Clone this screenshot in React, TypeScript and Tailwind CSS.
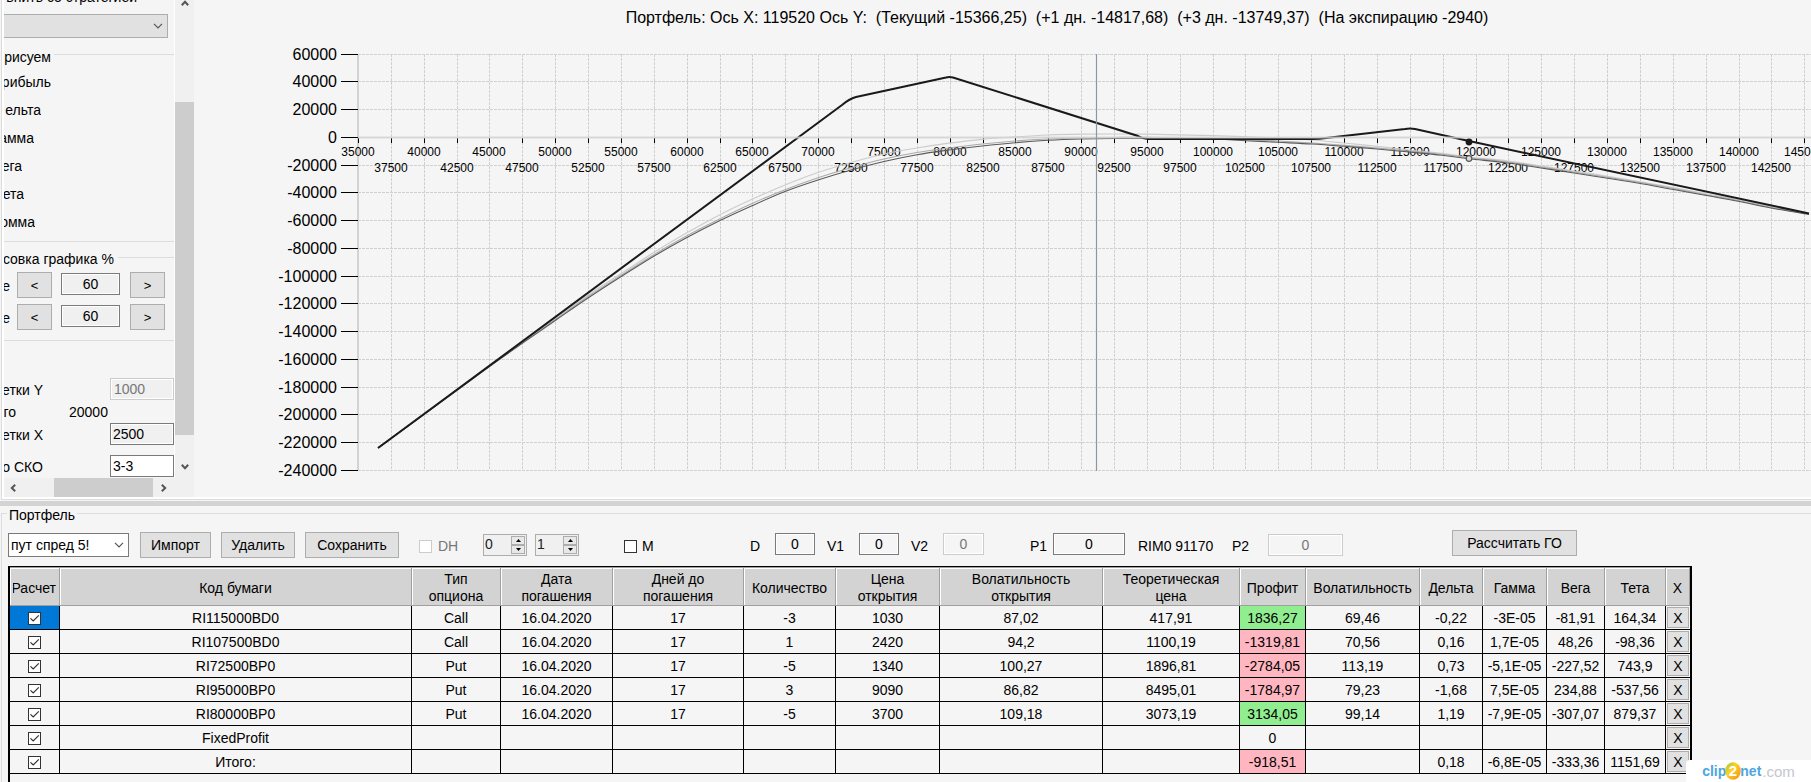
import React, { useState } from 'react';
import clsx from 'clsx';

interface Position {
  code: string;
  cells: string[];
  profit: string;
  greeks: string[];
}

const POSITIONS: Position[] = [
  { code: 'RI115000BD0', cells: ['Call', '16.04.2020', '17', '-3', '1030', '87,02', '417,91'], profit: '1836,27', greeks: ['69,46', '-0,22', '-3E-05', '-81,91', '164,34'] },
  { code: 'RI107500BD0', cells: ['Call', '16.04.2020', '17', '1', '2420', '94,2', '1100,19'], profit: '-1319,81', greeks: ['70,56', '0,16', '1,7E-05', '48,26', '-98,36'] },
  { code: 'RI72500BP0', cells: ['Put', '16.04.2020', '17', '-5', '1340', '100,27', '1896,81'], profit: '-2784,05', greeks: ['113,19', '0,73', '-5,1E-05', '-227,52', '743,9'] },
  { code: 'RI95000BP0', cells: ['Put', '16.04.2020', '17', '3', '9090', '86,82', '8495,01'], profit: '-1784,97', greeks: ['79,23', '-1,68', '7,5E-05', '234,88', '-537,56'] },
  { code: 'RI80000BP0', cells: ['Put', '16.04.2020', '17', '-5', '3700', '109,18', '3073,19'], profit: '3134,05', greeks: ['99,14', '1,19', '-7,9E-05', '-307,07', '879,37'] },
  { code: 'FixedProfit', cells: ['', '', '', '', '', '', ''], profit: '0', greeks: ['', '', '', '', ''] },
  { code: 'Итого:', cells: ['', '', '', '', '', '', ''], profit: '-918,51', greeks: ['', '0,18', '-6,8E-05', '-333,36', '1151,69'] },
];

const COLUMNS: { title: string; width: string }[] = [
  { title: 'Расчет', width: 'w-[50px]' },
  { title: 'Код бумаги', width: '' },
  { title: 'Тип опциона', width: 'w-[89px]' },
  { title: 'Дата погашения', width: 'w-[112px]' },
  { title: 'Дней до погашения', width: 'w-[131px]' },
  { title: 'Количество', width: 'w-[92px]' },
  { title: 'Цена открытия', width: 'w-[104px]' },
  { title: 'Волатильность открытия', width: 'w-[163px]' },
  { title: 'Теоретическая цена', width: 'w-[137px]' },
  { title: 'Профит', width: 'w-[66px]' },
  { title: 'Волатильность', width: 'w-[114px]' },
  { title: 'Дельта', width: 'w-[63px]' },
  { title: 'Гамма', width: 'w-[64px]' },
  { title: 'Вега', width: 'w-[58px]' },
  { title: 'Тета', width: 'w-[61px]' },
  { title: 'X', width: 'w-[24px]' },
];

const Chevron = ({ className }: { className?: string }) => (
  <svg viewBox="0 0 10 6" className={clsx('pointer-events-none h-[6px] w-[10px]', className)}>
    <path d="M1 0.8 L5 4.8 L9 0.8" fill="none" stroke="#555" strokeWidth="1.2" />
  </svg>
);

const ScrollArrow = ({ className }: { className?: string }) => (
  <svg viewBox="0 0 8 6" className={clsx('h-[6px] w-[8px]', className)}>
    <path d="M0.8 0.8 L4 4.2 L7.2 0.8" fill="none" stroke="#555" strokeWidth="2" />
  </svg>
);

const CheckBox = ({ id, label, defaultChecked, disabled }: { id: string; label?: string; defaultChecked?: boolean; disabled?: boolean }) => {
  const [checked, setChecked] = useState(!!defaultChecked);
  return (
    <span className="inline-grid align-middle">
      <input
        id={id}
        type="checkbox"
        aria-label={label}
        checked={checked}
        disabled={disabled}
        onChange={(e) => setChecked(e.target.checked)}
        className="col-start-1 row-start-1 size-[13px] appearance-none border border-[#333] bg-white disabled:border-[#ccc]"
      />
      {checked && (
        <svg viewBox="0 0 13 13" className="pointer-events-none col-start-1 row-start-1 size-[13px]">
          <path d="M2.5 6.3 L5.2 9 L10.8 3.4" fill="none" stroke="#333" strokeWidth="1.2" />
        </svg>
      )}
    </span>
  );
};

const Button = ({ className, children }: { className?: string; children: React.ReactNode }) => (
  <button type="button" className={clsx('h-[26px] border border-[#adadad] bg-[#e1e1e1] text-center hover:bg-[#e5f1fb]', className)}>
    {children}
  </button>
);

const Field = ({ id, value, label, disabled, className }: { id: string; value: string; label?: string; disabled?: boolean; className?: string }) => (
  <input
    id={id}
    aria-label={label}
    defaultValue={value}
    disabled={disabled}
    className={clsx('h-[22px] shrink-0 border border-[#7a7a7a] shadow-[inset_0_0_0_1px_white] disabled:border-[#ccc] disabled:text-[#777]', className)}
  />
);

const Spinner = ({ id, initial, label }: { id: string; initial: number; label: string }) => {
  const [value, setValue] = useState(initial);
  return (
    <div className="flex h-[22px] w-[44px] border border-[#adadad] bg-[#f0f0f0]">
      <input
        id={id}
        aria-label={label}
        value={value}
        onChange={(e) => setValue(Number(e.target.value) || 0)}
        className="h-[19px] w-[27px] bg-transparent pl-px leading-[19px] text-[#222]"
      />
      <div className="flex w-[14px] flex-col pt-px">
        <button type="button" aria-label="Больше" onClick={() => setValue(value + 1)} className="flex h-[9px] items-center justify-center border border-[#adadad] bg-[#e8e8e8]">
          <svg viewBox="0 0 5 3" className="h-[3px] w-[5px]"><path d="M0 3 L2.5 0 L5 3 Z" /></svg>
        </button>
        <button type="button" aria-label="Меньше" onClick={() => setValue(value - 1)} className="flex h-[9px] items-center justify-center border border-[#adadad] bg-[#e8e8e8]">
          <svg viewBox="0 0 5 3" className="h-[3px] w-[5px]"><path d="M0 0 L2.5 3 L5 0 Z" /></svg>
        </button>
      </div>
    </div>
  );
};

// Labels are cut on the left because the panel is scrolled horizontally
const CutLabel = ({ htmlFor, className, children }: { htmlFor?: string; className?: string; children: React.ReactNode }) => (
  <label htmlFor={htmlFor} className={clsx('flex shrink-0 justify-end overflow-hidden whitespace-nowrap', className)}>
    {children}
  </label>
);

const ScaleRow = ({ id, className }: { id: string; className?: string }) => {
  const [scale, setScale] = useState(60);
  return (
    <div className={clsx('flex items-center', className)}>
      <CutLabel htmlFor={id} className="w-[6px] pt-[2px]">е</CutLabel>
      <button type="button" onClick={() => setScale(scale - 5)} className="ml-[7px] h-[26px] w-[35px] border border-[#adadad] bg-[#e1e1e1] text-[13px]">&lt;</button>
      <input
        id={id}
        value={scale}
        onChange={(e) => setScale(Number(e.target.value) || 0)}
        className="mb-[2px] ml-[9px] h-[22px] w-[59px] border border-[#7a7a7a] bg-[#f0f0f0] text-center shadow-[inset_0_0_0_1px_white]"
      />
      <button type="button" onClick={() => setScale(scale + 5)} className="ml-[10px] h-[26px] w-[35px] border border-[#adadad] bg-[#e1e1e1] text-[13px]">&gt;</button>
    </div>
  );
};

const SettingsPanel = () => (
  <aside className="w-[190px] shrink-0">
    <div className="flex">
      <div className="w-[170px] overflow-hidden pb-px">
        <CutLabel htmlFor="compare" className="-mt-[13px] h-5 w-[133px] leading-5">внить со стратегией</CutLabel>
        <div className="mt-[7px] grid w-[164px] items-center">
          <select id="compare" className="col-start-1 row-start-1 h-6 appearance-none border border-l-0 border-[#adadad] bg-[#e1e1e1]">
            <option />
          </select>
          <Chevron className="col-start-1 row-start-1 mr-[5px] justify-self-end" />
        </div>

        <div className="mt-[9px] flex h-5 gap-[3px] leading-5">
          <CutLabel className="w-[47px]">рисуем</CutLabel>
          <div className="mt-[7px] h-px flex-1 bg-[#dcdcdc]" />
        </div>
        <div className="mt-px leading-7">
          <CutLabel className="w-[47px]">рибыль</CutLabel>
          <CutLabel className="w-[37px]">ельта</CutLabel>
          <CutLabel className="w-[30px]">амма</CutLabel>
          <CutLabel className="w-[18px]">ега</CutLabel>
          <CutLabel className="w-[20px]">ета</CutLabel>
          <CutLabel className="w-[31px]">омма</CutLabel>
        </div>
        <div className="mt-[5px] h-px bg-[#dcdcdc]" />

        <div className="mt-[7px] flex h-5 gap-1 leading-5">
          <CutLabel className="w-[110px]">совка графика %</CutLabel>
          <div className="mt-[8px] h-px flex-1 bg-[#dcdcdc]" />
        </div>
        <ScaleRow id="scale-more" className="mt-[3px]" />
        <ScaleRow id="scale-less" className="mt-[6px]" />
        <div className="mt-[10px] h-px bg-[#dcdcdc]" />

        <div className="mt-[37px] flex justify-between">
          <CutLabel htmlFor="grid-y" className="w-[39px] pt-1">етки Y</CutLabel>
          <Field id="grid-y" value="1000" disabled className="w-[64px] bg-[#f0f0f0] pl-[3px]" />
        </div>
        <div className="flex h-[23px] leading-6">
          <CutLabel className="w-[12px]">го</CutLabel>
          <span className="ml-[53px]">20000</span>
        </div>
        <div className="flex justify-between">
          <CutLabel htmlFor="grid-x" className="w-[39px] pt-1">етки X</CutLabel>
          <Field id="grid-x" value="2500" className="w-[64px] bg-[#f0f0f0] pl-[2px]" />
        </div>
        <div className="mt-[10px] flex justify-between">
          <CutLabel htmlFor="sko" className="w-[39px] pt-1">о СКО</CutLabel>
          <Field id="sko" value="3-3" className="w-[64px] bg-white pl-[2px]" />
        </div>
      </div>
      <div className="flex w-[20px] flex-col items-center border-l border-white bg-[#f0f0f0]">
        <ScrollArrow className="rotate-180" />
        <div className="mt-[96px] h-[333px] w-full bg-[#cdcdcd]" />
        <ScrollArrow className="mt-[29px]" />
      </div>
    </div>
    <div className="flex h-[19px] items-center bg-[#f0f0f0]">
      <ScrollArrow className="ml-[5px] rotate-90" />
      <div className="ml-[37px] h-full w-[99px] bg-[#cdcdcd]" />
      <ScrollArrow className="ml-[7px] -rotate-90" />
    </div>
  </aside>
);

const xPos = (strike: number) => Math.round(358 + ((strike - 35000) / 2500) * 32.87);
const yPos = (profit: number) => Math.round(136.95 - (profit / 20000) * 27.75);

const STRIKES = Array.from({ length: 45 }, (_, i) => 35000 + i * 2500);
const LEVELS = Array.from({ length: 16 }, (_, i) => 60000 - i * 20000);

type Point = [number, number];

const EXPIRATION = 'M378 448 L842 105 Q849 99 856 97 L946 77.5 Q949 76.5 953 77.5 L1138 136 Q1143 139 1148 139 L1312 139 Q1320 139 1326 138 L1405 129 Q1410 128 1415 129 L1469 141 L1809 213.5';
const CURRENT: Point[] = [[378, 448], [460, 388], [500, 359], [556, 320], [588, 298], [622, 276], [655, 255.5], [686, 238], [719, 221], [752, 205.7], [785, 191.5], [818, 180], [851, 170], [884, 161.5], [917, 154.7], [949, 150], [982, 146], [1015, 142.7], [1048, 140.3], [1081, 139], [1114, 138.5], [1147, 138.5], [1213, 139.3], [1246, 140.7], [1278, 142.3], [1312, 144], [1344, 146.3], [1377, 149], [1409, 152], [1442, 155.3], [1469, 158.7], [1508, 163], [1541, 168], [1574, 173], [1606, 178], [1639, 183.3], [1672, 189.3], [1705, 195.3], [1738, 201.3], [1771, 208], [1809, 214.5]];
const PLUS_ONE: Point[] = [[378, 448], [460, 388], [500, 358.5], [556, 319], [588, 296.5], [622, 274.7], [655, 254], [686, 236.3], [719, 219.3], [752, 203.5], [785, 189.7], [818, 177.7], [851, 167.7], [884, 159], [917, 152.5], [949, 148], [982, 144], [1015, 141], [1048, 139], [1081, 138], [1114, 137.5], [1147, 137.3], [1213, 138.3], [1246, 139.5], [1278, 141], [1312, 143], [1344, 145.3], [1377, 148], [1409, 151], [1442, 154.3], [1469, 157.7], [1508, 162], [1541, 167], [1574, 172], [1606, 177], [1639, 182.3], [1672, 188.3], [1705, 194.5], [1738, 200.5], [1771, 207.3], [1809, 214]];
const PLUS_THREE: Point[] = [[378, 448], [460, 388], [500, 358], [556, 317.5], [588, 295], [622, 273], [655, 251.7], [686, 233.3], [719, 215.2], [752, 199.3], [785, 185], [818, 172.5], [851, 162.5], [884, 154], [917, 148], [949, 143.2], [982, 139.3], [1015, 136.9], [1048, 135], [1081, 134.2], [1114, 134], [1147, 134.2], [1213, 135.7], [1278, 138], [1312, 140], [1344, 143], [1377, 146.3], [1409, 150], [1442, 153.3], [1469, 157], [1508, 161], [1541, 166], [1574, 171], [1606, 176], [1639, 181.5], [1672, 187.3], [1705, 193.5], [1738, 199.5], [1771, 206.3], [1809, 213.3]];

// Catmull-Rom spline through the points, as bezier segments
const smooth = (pts: Point[]) =>
  pts.slice(1).reduce((d, p, i) => {
    const prev = pts[Math.max(i - 1, 0)];
    const from = pts[i];
    const next = pts[Math.min(i + 2, pts.length - 1)];
    return `${d} C${from[0] + (p[0] - prev[0]) / 6} ${from[1] + (p[1] - prev[1]) / 6} ${p[0] - (next[0] - from[0]) / 6} ${p[1] - (next[1] - from[1]) / 6} ${p[0]} ${p[1]}`;
  }, `M${pts[0][0]} ${pts[0][1]}`);

const ProfitChart = () => (
  <svg viewBox="194 0 1617 497" preserveAspectRatio="xMinYMin meet" className="min-w-0 flex-1 self-start">
    <text x="1057" y="23" fontSize="16" textAnchor="middle">
      Портфель: Ось X: 119520 Ось Y:{'\u00a0 '}(Текущий -15366,25){'\u00a0 '}(+1 дн. -14817,68){'\u00a0 '}(+3 дн. -13749,37){'\u00a0 '}(На экспирацию -2940)
    </text>

    <g stroke="#d0d0d0" strokeDasharray="3 1" shapeRendering="crispEdges">
      {LEVELS.map((l) => <line key={l} x1="358" x2="1811" y1={yPos(l) + 0.5} y2={yPos(l) + 0.5} />)}
      {STRIKES.map((s) => <line key={s} x1={xPos(s) + 0.5} x2={xPos(s) + 0.5} y1="54" y2="470" />)}
    </g>

    {/* Axes */}
    <line x1="358" x2="358" y1="54" y2="471" stroke="#d3d3d3" strokeWidth="2" />
    {LEVELS.map((l) => (
      <g key={l}>
        <line x1="341" x2="358" y1={yPos(l) + 0.5} y2={yPos(l) + 0.5} stroke="#000" />
        <text x="337" y={yPos(l) + 6} fontSize="16" textAnchor="end">{l}</text>
      </g>
    ))}
    {STRIKES.map((s, i) => (
      <g key={s}>
        <line x1={xPos(s) + 0.5} x2={xPos(s) + 0.5} y1="138" y2="143" stroke="#000" />
        <text x={xPos(s)} y={i % 2 ? 172 : 156} fontSize="12" textAnchor="middle">{s}</text>
      </g>
    ))}

    <g fill="none">
      <path d={smooth(PLUS_THREE)} stroke="#cccccc" strokeWidth="1.2" />
      <path d={smooth(PLUS_ONE)} stroke="#aaaaaa" strokeWidth="1.1" />
      <path d={smooth(CURRENT)} stroke="#5a5a5a" strokeWidth="1.1" />
      <path d={EXPIRATION} stroke="#1a1a1a" strokeWidth="2" />
    </g>
    <line x1="358" x2="1811" y1="137.5" y2="137.5" stroke="#d3d3d3" strokeWidth="2" strokeOpacity="0.8" />
    <line x1="1096.5" x2="1096.5" y1="54" y2="471" stroke="#8c96a0" strokeWidth="1.2" />

    {/* Cursor markers */}
    <circle cx="1469" cy="142" r="3.4" fill="#1a1a1a" />
    <circle cx="1469" cy="158.5" r="2.8" fill="#ddd" stroke="#555" strokeWidth="1.2" />
  </svg>
);

const Toolbar = () => (
  <div className="flex items-start pt-[6px]">
    <div className="mt-[3px] grid w-[121px] items-center">
      <select aria-label="Портфель" className="col-start-1 row-start-1 h-6 appearance-none border border-[#7a7a7a] bg-white pl-[2px]">
        <option>пут спред 5!</option>
      </select>
      <Chevron className="col-start-1 row-start-1 mr-[5px] justify-self-end" />
    </div>
    <Button className="mt-[2px] ml-[11px] w-[71px]">Импорт</Button>
    <Button className="mt-[2px] ml-[10px] w-[74px]">Удалить</Button>
    <Button className="mt-[2px] ml-[10px] w-[94px]">Сохранить</Button>

    <div className="mt-[6px] ml-[20px] flex h-5 items-center gap-[6px] text-[#777]">
      <CheckBox id="dh" disabled />
      <label htmlFor="dh" className="w-[21px]">DH</label>
    </div>
    <div className="mt-[4px] ml-[24px] flex gap-2">
      <Spinner id="dh-from" initial={0} label="DH от" />
      <Spinner id="dh-to" initial={1} label="DH до" />
    </div>
    <div className="mt-[6px] ml-[45px] flex h-5 items-center gap-[5px]">
      <CheckBox id="m" />
      <label htmlFor="m" className="w-[12px]">M</label>
    </div>

    <label htmlFor="d" className="mt-[8px] ml-[96px] w-[25px]">D</label>
    <Field id="d" value="0" className="mt-[3px] w-[40px] text-center" />
    <label htmlFor="v1" className="mt-[8px] ml-[12px] w-[32px]">V1</label>
    <Field id="v1" value="0" className="mt-[3px] w-[40px] text-center" />
    <label htmlFor="v2" className="mt-[8px] ml-[12px] w-[32px]">V2</label>
    <Field id="v2" value="0" disabled className="mt-[3px] w-[41px] text-center" />
    <label htmlFor="p1" className="mt-[8px] ml-[46px] w-[23px]">P1</label>
    <Field id="p1" value="0" className="mt-[3px] w-[72px] text-center" />
    <span className="mt-[8px] ml-[13px] w-[81px] whitespace-nowrap">RIM0 91170</span>
    <label htmlFor="p2" className="mt-[8px] ml-[13px] w-[36px]">P2</label>
    <Field id="p2" value="0" disabled className="mt-[4px] w-[75px] text-center" />
    <Button className="ml-[109px] w-[125px]">Рассчитать ГО</Button>
  </div>
);

const PositionsTable = () => (
  <div className="mr-[119px] flex-1 border-x-2 border-t border-black">
    <table className="w-full table-fixed border-separate border-spacing-0 border-t border-[#a0a0a0] text-center">
      <colgroup>
        {COLUMNS.map((c, i) => <col key={i} className={c.width} />)}
      </colgroup>
      <thead>
        <tr className="h-[38px] bg-[#d3d3d3]">
          {COLUMNS.map((c, i) => (
            <th key={i} className="border-r border-b border-[#a0a0a0] p-0 pt-[3px] font-normal shadow-[inset_1px_1px_0_white]">
              {i === 0 ? (
                <span className="mx-auto flex w-[43px] justify-end overflow-hidden">{c.title}</span>
              ) : (
                <span className={clsx('block', c.title.includes(' ') && i > 1 && 'px-[10px]')}>{c.title}</span>
              )}
            </th>
          ))}
        </tr>
      </thead>
      <tbody>
        {POSITIONS.map((p, row) => (
          <tr key={p.code} className="h-6 *:border-r *:border-b *:border-black *:p-0 *:last:border-r-0">
            <td className={clsx('leading-none', row === 0 && 'bg-[#0078d7]')}>
              <CheckBox id={`use-${row}`} label={`Расчет ${p.code}`} defaultChecked />
            </td>
            <td><div className="pt-px">{p.code}</div></td>
            {p.cells.map((c, i) => <td key={i}><div className="pt-px">{c}</div></td>)}
            <td className={clsx(parseFloat(p.profit) > 0 && 'bg-[#90ee90]', parseFloat(p.profit) < 0 && 'bg-[#ffb6c1]')}>
              <div className="pt-px">{p.profit}</div>
            </td>
            {p.greeks.map((g, i) => <td key={i}><div className="pt-px">{g}</div></td>)}
            <td>
              <button type="button" className="ml-px block h-[21px] w-[22px] border border-[#adadad] bg-[#e1e1e1] leading-[18px]">X</button>
            </td>
          </tr>
        ))}
      </tbody>
    </table>
  </div>
);

const Watermark = () => (
  <div className="absolute right-0 bottom-0 flex h-[22px] w-[125px] items-center justify-center rounded-tl bg-white text-[14px] leading-none">
    <span className="font-bold text-[#4da6e0]">clip</span>
    <svg viewBox="0 0 16 18" className="-mx-px h-[18px] w-[16px]">
      <defs>
        <linearGradient id="ball" x1="0" x2="1" y1="0" y2="1">
          <stop offset="0" stopColor="#8cc63f" />
          <stop offset="0.4" stopColor="#ffd21f" />
          <stop offset="1" stopColor="#f08a1c" />
        </linearGradient>
      </defs>
      <ellipse cx="8" cy="9" rx="7.8" ry="8.8" fill="url(#ball)" />
      <text x="8" y="14" fontSize="15" fontWeight="bold" fill="#fff" textAnchor="middle">2</text>
    </svg>
    <span className="font-bold text-[#4da6e0]">net</span>
    <span className="ml-px text-[15px] text-[#c4c6cf]">.com</span>
  </div>
);

export default function App() {
  return (
    <div className="relative flex h-screen flex-col overflow-hidden bg-[#f5f5f5] font-['Liberation_Sans',Arial,sans-serif] text-[14px] leading-[17px] text-black">
      <div className="mb-px ml-px shrink-0 border-b border-l border-[#dcdcdc]">
        <div className="flex overflow-hidden border-b-2 border-l-2 border-white">
          <SettingsPanel />
          <ProfitChart />
        </div>
      </div>
      <div className="h-[5px] shrink-0 bg-[#d3d3d3]" />

      <section className="ml-px flex flex-1 flex-col">
        <div className="flex h-[18px]">
          <div className="mt-[7px] w-[6px] border-t border-l border-[#dcdcdc]" />
          <h2 className="mx-[2px] mt-px">Портфель</h2>
          <div className="mt-[7px] h-px flex-1 bg-[#dcdcdc]" />
        </div>
        <div className="flex flex-1 flex-col border-l border-[#dcdcdc] pl-[6px]">
          <Toolbar />
          <div className="mt-2 flex flex-1 flex-col">
            <PositionsTable />
          </div>
        </div>
      </section>
      <Watermark />
    </div>
  );
}
